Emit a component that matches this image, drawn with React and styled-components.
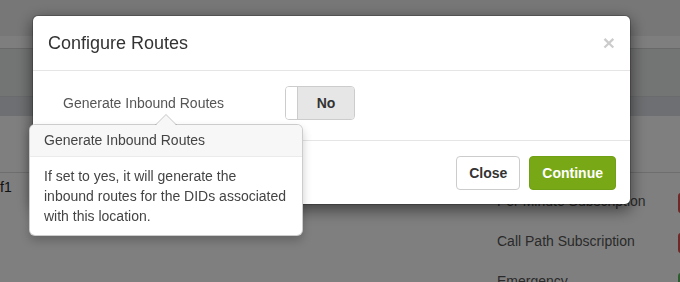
import React from "react";
import styled, { createGlobalStyle } from "styled-components";

const Global = createGlobalStyle`
  html, body { margin: 0; padding: 0; }
  body {
    width: 680px; height: 282px; overflow: hidden;
    font-family: "Liberation Sans", Arial, sans-serif;
    font-size: 14px; color: #333; background: #fff;
  }
`;

const Page = styled.div`
  display: flex;
  flex-direction: column;
  width: 680px;
  height: 282px;
  overflow: hidden;
`;

const Strip = styled.div`
  height: ${(p) => p.$h}px;
  background: ${(p) => p.$bg};
  border-top: ${(p) => (p.$line ? `1px solid ${p.$line}` : "none")};
  border-bottom: ${(p) => (p.$bottom ? `1px solid ${p.$bottom}` : "none")};
  flex: none;
`;

const Content = styled.div`
  display: grid;
  grid-template-columns: 497px 1fr;
`;

const LeftCell = styled.div`
  padding-top: 4px;
  line-height: 20px;
  color: #222;
`;

const List = styled.div`
  padding-top: 8px;
  display: flex;
  flex-direction: column;
`;

const ListRow = styled.div`
  height: 40px;
  display: grid;
  grid-template-columns: 181px 40px;
  align-items: center;
  color: #555;
`;

const Badge = styled.span`
  display: block;
  height: 20px;
  margin-top: 4px;
  border-radius: 3px;
  background: ${(p) => p.$color};
`;

const Backdrop = styled.div`
  position: fixed;
  inset: 0;
  background: rgba(0, 0, 0, 0.5);
`;

const Dialog = styled.div`
  position: fixed;
  left: 32px;
  top: 15px;
  width: 599px;
  box-sizing: border-box;
  background: #fff;
  border: 1px solid rgba(0, 0, 0, 0.2);
  border-radius: 6px;
  box-shadow: 0 5px 15px rgba(0, 0, 0, 0.5);
  background-clip: padding-box;
`;

const Header = styled.div`
  display: flex;
  justify-content: space-between;
  align-items: flex-start;
  padding: 15px;
  border-bottom: 1px solid #e5e5e5;
`;

const Title = styled.h4`
  margin: 0;
  font-size: 18px;
  font-weight: normal;
  line-height: 24px;
  color: #333;
`;

const CloseX = styled.button`
  border: 0;
  background: none;
  padding: 0;
  margin-top: 1px;
  font-family: "Liberation Sans", Arial, sans-serif;
  font-size: 21px;
  font-weight: bold;
  line-height: 1;
  color: #000;
  opacity: 0.2;
`;

const Body = styled.div`
  padding: 15px 15px 20px;
  border-bottom: 1px solid #e5e5e5;
`;

const FieldRow = styled.div`
  display: flex;
  align-items: center;
`;

const Label = styled.div`
  width: 222px;
  padding-left: 15px;
  color: #555;
  font-size: 14px;
`;

const Toggle = styled.div`
  display: flex;
  width: 70px;
  height: 34px;
  box-sizing: border-box;
  border: 1px solid #ccc;
  border-radius: 4px;
  overflow: hidden;
`;

const Knob = styled.span`
  width: 11px;
  background: #fff;
  border-right: 1px solid #ccc;
`;

const ToggleState = styled.span`
  flex: 1;
  display: flex;
  align-items: center;
  justify-content: center;
  background: #e6e6e6;
  font-weight: bold;
  color: #333;
`;

const Footer = styled.div`
  display: flex;
  justify-content: flex-end;
  gap: 9px;
  padding: 15px 14px 14px 15px;
`;

const Button = styled.button`
  height: 34px;
  padding: 0 12px;
  box-sizing: border-box;
  border-radius: 4px;
  font-family: "Liberation Sans", Arial, sans-serif;
  font-size: 14px;
  font-weight: bold;
  border: 1px solid ${(p) => (p.$primary ? "#70a015" : "#ccc")};
  background: ${(p) => (p.$primary ? "#78a816" : "#fff")};
  color: ${(p) => (p.$primary ? "#fff" : "#333")};
`;

const Popover = styled.div`
  position: fixed;
  left: 29px;
  top: 124px;
  width: 274px;
  box-sizing: border-box;
  background: #fff;
  border: 1px solid rgba(0, 0, 0, 0.2);
  border-radius: 6px;
  box-shadow: 0 5px 10px rgba(0, 0, 0, 0.2);
`;

const Arrow = styled.span`
  position: absolute;
  left: 50%;
  top: -11px;
  margin-left: -11px;
  width: 0;
  height: 0;
  border-left: 11px solid transparent;
  border-right: 11px solid transparent;
  border-bottom: 11px solid rgba(0, 0, 0, 0.22);
  &::after {
    content: "";
    position: absolute;
    left: -10px;
    top: 1px;
    border-left: 10px solid transparent;
    border-right: 10px solid transparent;
    border-bottom: 10px solid #f7f7f7;
  }
`;

const PopTitle = styled.div`
  padding: 7px 14px;
  line-height: 17px;
  background: #f7f7f7;
  border-bottom: 1px solid #ebebeb;
  border-radius: 5px 5px 0 0;
  color: #444;
`;

const PopBody = styled.div`
  padding: 9px 14px;
  line-height: 20px;
  color: #444;
`;

export default function App() {
  return (
    <>
      <Global />
      <Page>
        <Strip $h={36} $bg="#eeeeee" />
        <Strip $h={12} $bg="#fcfcfc" />
        <Strip $h={47} $bg="#e6e8e8" $line="#d2d2d2" />
        <Strip $h={19} $bg="#dcdfe4" $line="#d4d6d8" />
        <Strip $h={56} $bg="#fefefe" $bottom="#dddddd" />
        <Content>
          <LeftCell>f1</LeftCell>
          <List>
            <ListRow>
              <span>Per Minute Subscription</span>
              <Badge $color="#d9534f" />
            </ListRow>
            <ListRow>
              <span>Call Path Subscription</span>
              <Badge $color="#d9534f" />
            </ListRow>
            <ListRow>
              <span>Emergency</span>
              <Badge $color="#5cb85c" />
            </ListRow>
          </List>
        </Content>
      </Page>
      <Backdrop />
      <Dialog>
        <Header>
          <Title>Configure Routes</Title>
          <CloseX aria-label="Close">×</CloseX>
        </Header>
        <Body>
          <FieldRow>
            <Label>Generate Inbound Routes</Label>
            <Toggle>
              <Knob />
              <ToggleState>No</ToggleState>
            </Toggle>
          </FieldRow>
        </Body>
        <Footer>
          <Button>Close</Button>
          <Button $primary>Continue</Button>
        </Footer>
      </Dialog>
      <Popover>
        <Arrow />
        <PopTitle>Generate Inbound Routes</PopTitle>
        <PopBody>
          If set to yes, it will generate the inbound routes for the DIDs
          associated with this location.
        </PopBody>
      </Popover>
    </>
  );
}
